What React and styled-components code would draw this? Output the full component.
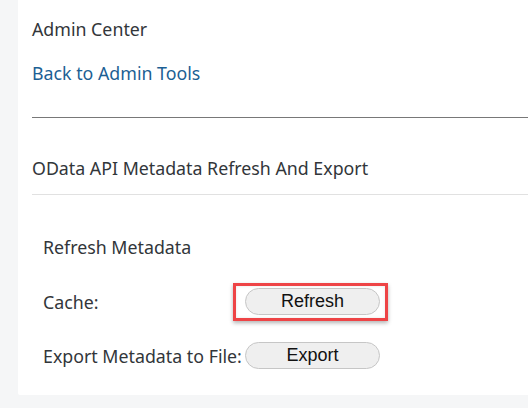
import React from "react";
import styled, { createGlobalStyle } from "styled-components";

const Global = createGlobalStyle`
  html, body {
    margin: 0;
    padding: 0;
    background: #f5f6f7;
  }
  body {
    font-family: "Noto Sans", "Liberation Sans", Arial, sans-serif;
    color: #32363a;
  }
`;

const Page = styled.div`
  width: 528px;
  height: 408px;
  background: #f5f6f7;
  padding: 0 0 13px 18px;
  box-sizing: border-box;
  overflow: hidden;
`;

const Panel = styled.div`
  background: #fff;
  height: 100%;
  padding-left: 14px;
  box-sizing: border-box;
  border-bottom-left-radius: 2px;
`;

const Header = styled.div`
  display: flex;
  flex-direction: column;
  padding-top: 17px;
`;

const Title = styled.div`
  font-size: 17.8px;
  line-height: 24px;
  color: #32363a;
`;

const BackLink = styled.a`
  font-size: 17.8px;
  line-height: 24px;
  color: #1c5f94;
  text-decoration: none;
  margin-top: 20px;
  cursor: pointer;
`;

const Divider = styled.hr`
  border: none;
  margin: 0;
  height: 1px;
  background: ${(p) => (p.$light ? "#e1e1e1" : "#787878")};
  margin-top: ${(p) => p.$top || 0}px;
`;

const SectionTitle = styled.div`
  font-size: 17.8px;
  line-height: 24px;
  margin-top: 38px;
  color: #32363a;
`;

const Form = styled.div`
  display: flex;
  flex-direction: column;
  padding-left: 11px;
  padding-top: 40px;
`;

const SubTitle = styled.div`
  font-size: 17.8px;
  line-height: 24px;
  margin-bottom: 29px;
`;

const Row = styled.div`
  display: grid;
  grid-template-columns: 202px auto;
  align-items: center;
  height: 27px;
  margin-bottom: 27px;
  font-size: 17.8px;
`;

const Label = styled.span`
  white-space: nowrap;
`;

const Highlight = styled.div`
  position: relative;
  width: 135px;
  height: 27px;
  &::after {
    content: "";
    position: absolute;
    left: -12px;
    top: -5px;
    right: -8px;
    bottom: -6px;
    border: 3px solid #ee4446;
    box-shadow: 0 2px 4px rgba(0, 0, 0, 0.3), inset 0 0 3px rgba(0, 0, 0, 0.1);
    pointer-events: none;
  }
`;

const Button = styled.button`
  width: 135px;
  height: 27px;
  border: 1px solid #c6c6c6;
  border-radius: 14px;
  background: #efefef;
  font-family: "Liberation Sans", Arial, sans-serif;
  font-size: 18px;
  color: #111;
  padding: 0;
  cursor: pointer;
`;

export default function App() {
  return (
    <>
      <Global />
      <Page>
        <Panel>
          <Header>
            <Title>Admin Center</Title>
            <BackLink>Back to Admin Tools</BackLink>
            <Divider $top={32} />
          </Header>
          <SectionTitle>OData API Metadata Refresh And Export</SectionTitle>
          <Divider $light $top={14} />
          <Form>
            <SubTitle>Refresh Metadata</SubTitle>
            <Row>
              <Label>Cache:</Label>
              <Highlight>
                <Button>Refresh</Button>
              </Highlight>
            </Row>
            <Row>
              <Label>Export Metadata to File:</Label>
              <Button>Export</Button>
            </Row>
          </Form>
        </Panel>
      </Page>
    </>
  );
}
